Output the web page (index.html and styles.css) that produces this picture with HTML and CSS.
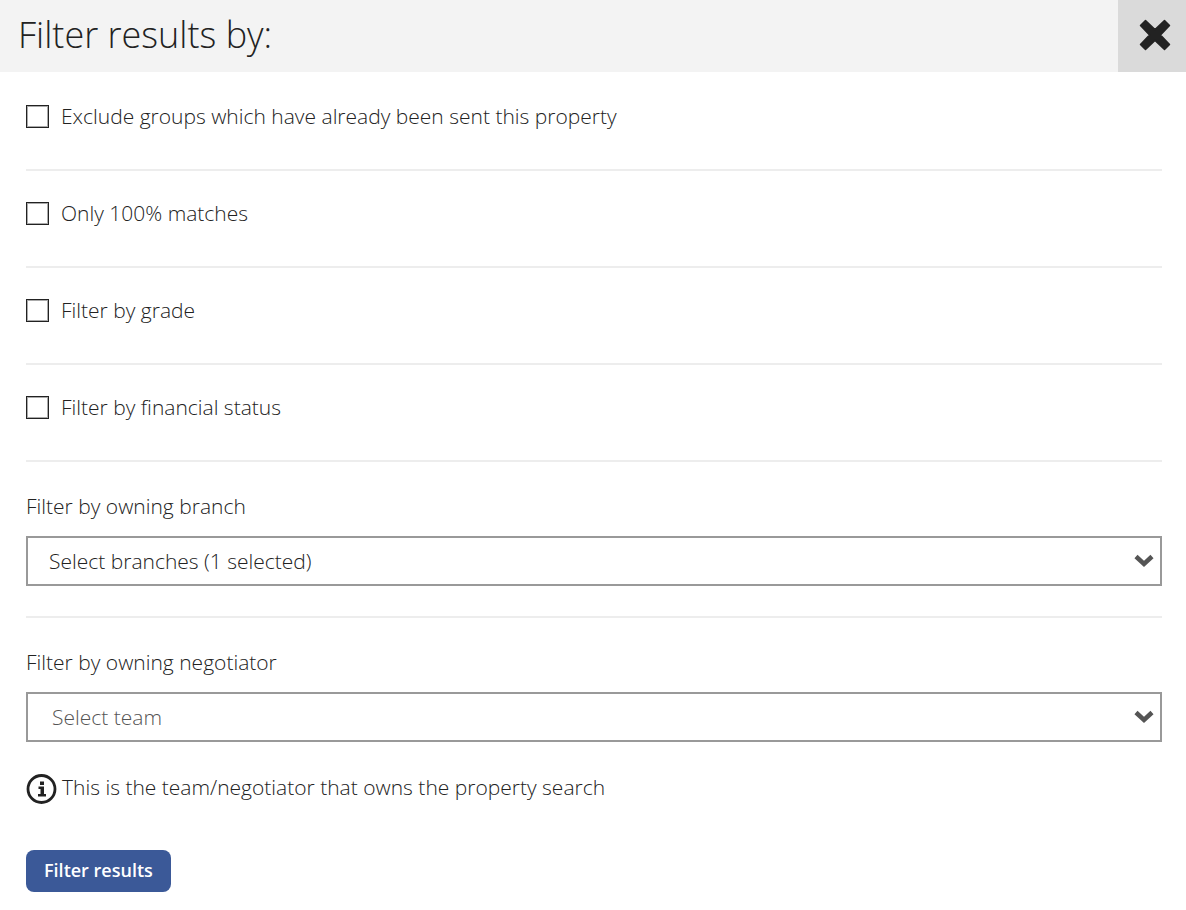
FILE: index.html
```
<!DOCTYPE html>
<html lang="en">
<head>
    <meta charset="UTF-8">
    <meta name="viewport" content="width=device-width, initial-scale=1.0">
    <title>Filter results</title>
    <link rel="stylesheet" href="styles.css">
</head>
<body>
    <header class="header">
        <h1 class="title">Filter results by:</h1>
        <button type="button" class="close" aria-label="Close">
            <svg width="32" height="32" viewBox="0 0 32 32">
                <path d="M6.500 1.500 L16 10.500 L25.500 1.500 L30.500 6.500 L21.500 16 L30.500 25.500 L25.500 30.500 L16 21.500 L6.500 30.500 L1.500 25.500 L10.500 16 L1.500 6.500 Z" fill="#222" stroke="#222" stroke-width="1.500" stroke-linejoin="round"/>
            </svg>
        </button>
    </header>

    <form class="filters">
        <div class="check-row">
            <input type="checkbox" id="exclude">
            <label for="exclude">Exclude groups which have already been sent this property</label>
        </div>
        <div class="check-row">
            <input type="checkbox" id="matches">
            <label for="matches">Only 100% matches</label>
        </div>
        <div class="check-row">
            <input type="checkbox" id="grade">
            <label for="grade">Filter by grade</label>
        </div>
        <div class="check-row">
            <input type="checkbox" id="financial">
            <label for="financial">Filter by financial status</label>
        </div>

        <div class="select-row">
            <label for="branch">Filter by owning branch</label>
            <div class="select-box">
                <select id="branch">
                    <option>Select branches (1 selected)</option>
                </select>
                <svg class="arrow" width="20" height="14" viewBox="0 0 20 14">
                    <path d="M2 2.500 L10 10 L18 2.500" fill="none" stroke="#555" stroke-width="4.500"/>
                </svg>
            </div>
        </div>

        <div class="select-row">
            <label for="team">Filter by owning negotiator</label>
            <div class="select-box">
                <select id="team" class="placeholder">
                    <option>Select team</option>
                </select>
                <svg class="arrow" width="20" height="14" viewBox="0 0 20 14">
                    <path d="M2 2.500 L10 10 L18 2.500" fill="none" stroke="#555" stroke-width="4.500"/>
                </svg>
            </div>
        </div>

        <p class="note">
            <svg width="32" height="32" viewBox="0 0 32 32">
                <circle cx="15.500" cy="16" r="13.500" fill="none" stroke="#222" stroke-width="2.800"/>
                <path d="M14 8.500 h4 v3.500 h-4 Z M12.500 13.500 H18 V21 H20 V23.500 H12 V21 H14.500 V16 H12.500 Z" fill="#222"/>
            </svg>
            <span>This is the team/negotiator that owns the property search</span>
        </p>

        <button type="submit" class="submit">Filter results</button>
    </form>
</body>
</html>
```
FILE: styles.css
```
* {
    box-sizing: border-box;
}
body {
    font-family: "Open Sans", Arial, sans-serif;
    font-size: 21px;
    font-weight: 300;
    line-height: 30px;
    color: #222;
    background-color: white;
    margin: 0;
}
.header {
    display: flex;
    justify-content: space-between;
    height: 72px;
    background-color: #f3f3f3;
}
.title {
    margin: 0;
    padding-left: 18px;
    font-size: 36px;
    font-weight: 300;
    line-height: 70px;
}
.close {
    display: flex;
    align-items: center;
    justify-content: center;
    width: 68px;
    padding: 0 0 2px 6px;
    border: none;
    background-color: #dadada;
    cursor: pointer;
}
.filters {
    padding: 2px 24px 18px 26px;
}
.check-row {
    display: flex;
    align-items: center;
    gap: 12px;
    padding: 27px 0 38px;
    border-bottom: 2px solid #ededed;
}
.check-row input {
    appearance: none;
    width: 23px;
    height: 23px;
    margin: 0;
    border: 1px solid #222;
    box-shadow: inset 0 0 0 1px #aaa;
}
.check-row input:checked {
    background-color: #3b5998;
}
.select-row {
    padding: 29px 0 30px;
    border-bottom: 2px solid #ededed;
}
.select-row + .select-row {
    padding-bottom: 0;
    border-bottom: none;
}
.select-row label {
    display: block;
    margin-bottom: 15px;
}
.select-box {
    position: relative;
}
.select-box select {
    display: block;
    appearance: none;
    width: 100%;
    height: 50px;
    padding: 0 40px 0 21px;
    border: 2px solid #999;
    border-radius: 0;
    background-color: white;
    color: #222;
    font: inherit;
}
.select-box .placeholder {
    padding-left: 24px;
    color: #555;
}
.arrow {
    position: absolute;
    top: 18px;
    right: 8px;
    pointer-events: none;
}
.note {
    display: flex;
    align-items: flex-start;
    gap: 4px;
    margin: 31px 0 45px;
    line-height: 28px;
}
.submit {
    display: block;
    height: 42px;
    padding: 0 18px 3px;
    border: none;
    border-radius: 8px;
    background-color: #3b5998;
    color: white;
    font-family: inherit;
    font-size: 18px;
    font-weight: 600;
    cursor: pointer;
}
```
